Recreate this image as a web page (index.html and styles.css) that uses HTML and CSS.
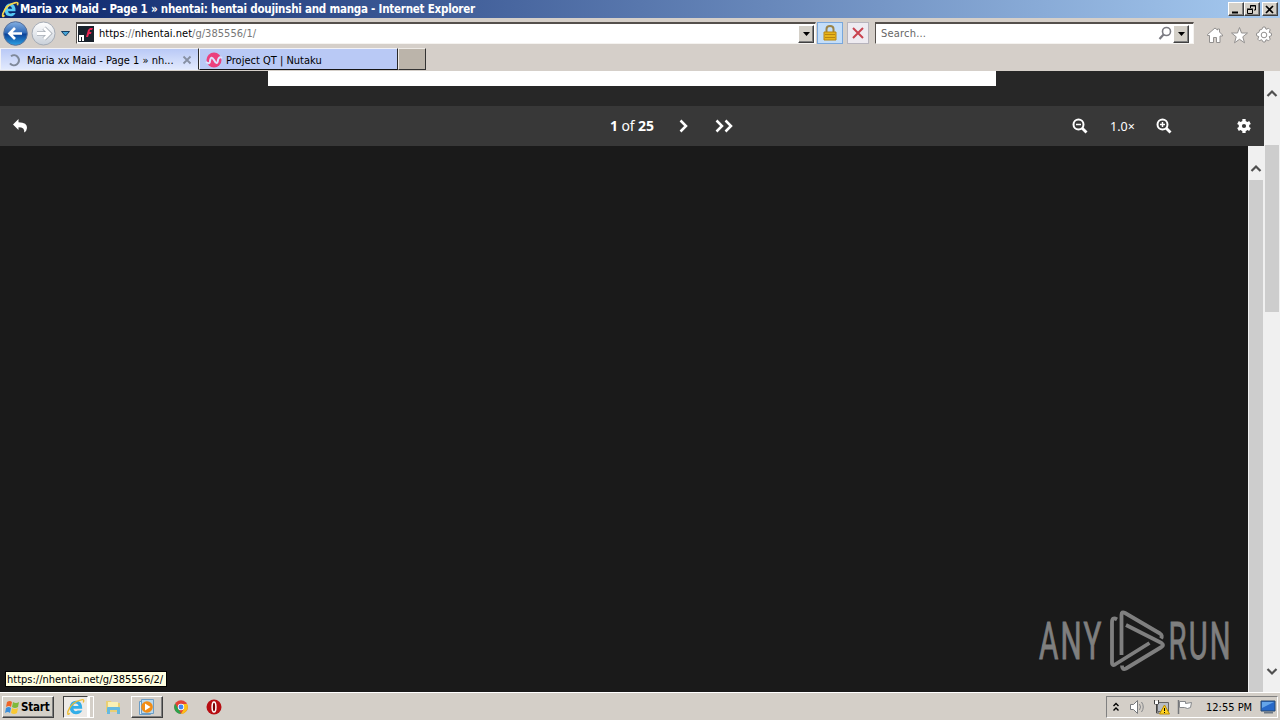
FILE: index.html
```html
<!DOCTYPE html>
<html lang="en">
<head>
    <meta charset="UTF-8">
    <title>Internet Explorer</title>
    <link rel="stylesheet" href="styles.css">
</head>
<body>
    <header class="titlebar">
        <svg class="ie-small" width="17" height="17" viewBox="0 0 20 20"><path d="M16 12H7q1 4 5 2h4q-2 4-6 4-7 0-7-8 1-7 7-7 6 0 6 9M7 9h5q-1-3-3-3-2 0-2 3" fill="#55c8f4" fill-rule="evenodd"/><path d="M3 17Q0 20 1 15 5 4 16 2q4-1 2 3" fill="none" stroke="#f5d34b" stroke-width="2"/></svg>
        <span class="window-title">Maria xx Maid - Page 1 » nhentai: hentai doujinshi and manga - Internet Explorer</span>
        <div class="window-buttons">
            <button><svg width="14" height="11"><path d="M3 8.5h6" stroke="#000" stroke-width="2"/></svg></button>
            <button><svg width="14" height="11"><path d="M5.500 4V1.500h5V6H9M5 2h6M2.500 5.500h5v4h-5zM2 5h6" fill="none" stroke="#000"/></svg></button>
            <button class="close"><svg width="14" height="11"><path d="M3 2l7 7M10 2L3 9" stroke="#000" stroke-width="1.700"/></svg></button>
        </div>
    </header>

    <div class="navbar">
        <svg class="nav-arrows" width="74" height="30" viewBox="0 0 74 30">
            <defs>
                <linearGradient id="blue" x2="0" y2="1"><stop stop-color="#85b0e2"/><stop offset=".48" stop-color="#2e69b8"/><stop offset=".52" stop-color="#0c4197"/><stop offset="1" stop-color="#2ba1e5"/></linearGradient>
                <linearGradient id="silver" x2="0" y2="1"><stop stop-color="#fff"/><stop offset="1" stop-color="#c9d0d9"/></linearGradient>
            </defs>
            <circle cx="15.500" cy="15.500" r="11.800" fill="url(#blue)" stroke="#56709b"/>
            <path d="M22 15.500H10m5-5.500l-5.500 5.500L15 21" fill="none" stroke="#fff" stroke-width="2.700"/>
            <circle cx="43.500" cy="15.500" r="11.500" fill="url(#silver)" stroke="#a4abb5"/>
            <path d="M37 15.500h12M44 10l5.500 5.500L44 21" fill="none" stroke="#aab0b8" stroke-width="4.500"/>
            <path d="M37 15.500h12M44 10l5.500 5.500L44 21" fill="none" stroke="#fff" stroke-width="2.800"/>
            <path d="M61.500 13.500h8l-4 4.500z" fill="#46a5d8" stroke="#153f63"/>
        </svg>
        <div class="address field">
            <svg width="16" height="16"><path d="M0 0h16v16H0z" fill="#19222c"/><path d="M1 15V9h5v6H4v-4H3v4z" fill="#fff"/><path d="M8 11l2-7 2-2h3l-1 2h-2l-.500 2h2l-.500 2h-2l-1 3z" fill="#ed2553"/></svg>
            <span class="url">https<i>://</i>nhentai.net<i>/g/385556/1/</i></span>
            <button class="drop"><svg width="9" height="6"><path d="M1 1h7L4.500 5z"/></svg></button>
        </div>
        <div class="tool lock"><svg width="16" height="18" viewBox="0 0 16 18"><path d="M4.500 9V5q0-3 3.500-3t3.500 3v4" fill="none" stroke="#9b8448" stroke-width="2"/><path d="M2 8h12v8H2z" fill="#e8b51b" stroke="#b98510"/><path d="M3 10.500h10M3 13.500h10" stroke="#b98510"/></svg></div>
        <div class="tool stop"><svg width="14" height="14"><path d="M2 2l10 10M12 2L2 12" stroke="#c94350" stroke-width="2"/></svg></div>
        <div class="search field">
            <span class="search-text">Search...</span>
            <svg width="15" height="15"><circle cx="8.500" cy="5.500" r="4" fill="none" stroke="#7b7b82" stroke-width="1.600"/><path d="M5.800 8.300L1.500 13" stroke="#7b7b82" stroke-width="2.200"/></svg>
            <button class="drop"><svg width="9" height="6"><path d="M1 1h7L4.500 5z"/></svg></button>
        </div>
        <svg class="commands" width="72" height="20" viewBox="0 0 72 20">
            <g fill="#fff" stroke="#92908f">
                <path d="M2.500 10.500v-1L10 3l2.500 2V4h2v3l3 3v1H15v6.500h-3.500v-5h-3v5H4.500v-7z"/>
                <path d="M34.500 2.500l2 5.500h6l-4.700 3.800 1.700 6-5-3.500-5 3.500 1.700-6L26.500 8h6z"/>
                <path d="M57.700 3.400l2-.400 1.400-2.500h2l.900 2.300 2.700-1 1.500 1.500-1 2.600 2.300 1v2.200l-2.300 1 1 2.600-1.500 1.500-2.700-1-.900 2.300h-2l-1.400-2.300-2.400 1-1.500-1.500 1-2.600-2.300-1V6.900l2.300-1z" transform="translate(-3 1.500)"/>
                <circle cx="59" cy="10" r="2.800"/>
            </g>
        </svg>
    </div>

    <nav class="tabs">
        <div class="tab active">
            <svg width="14" height="14"><path d="M4 3.300a5 5 0 1 1-1 7" fill="none" stroke="#7f899a" stroke-width="2"/></svg>
            <span class="tab-text">Maria xx Maid - Page 1 » nh...</span>
            <svg class="tab-close" width="10" height="10"><path d="M1.500 1.500l7 7M8.500 1.500l-7 7" stroke="#8790a3" stroke-width="1.800"/></svg>
        </div>
        <div class="tab">
            <svg width="16" height="16"><circle cx="8" cy="8" r="7.500" fill="#ec407d"/><path d="M0 10q4 3 4-1 1-6 4-1 3 6 4 0 1-4 4-2" fill="none" stroke="#dce5ff" stroke-width="2"/></svg>
            <span class="tab-text">Project QT | Nutaku</span>
        </div>
        <div class="new-tab"></div>
    </nav>

    <main class="viewport">
        <div class="page">
            <div class="page-top"><div class="banner"></div></div>
            <div class="reader-bar">
                <svg class="back" width="16" height="16"><path d="M1 6.500L6.500 1v3.200Q15.500 4.500 15 10q-.200 3-2.800 4.500Q13 9.300 6.500 9.200V12z" fill="#fff"/></svg>
                <div class="pager">
                    <span class="count"><b>1</b> of <b>25</b></span>
                    <svg width="12" height="14"><path d="M3.500 1.500L9 7l-5.500 5.500" fill="none" stroke="#fff" stroke-width="2.500"/></svg>
                    <svg class="last" width="20" height="14"><path d="M1.500 1.500L7 7l-5.500 5.500M10.500 1.500L16 7l-5.500 5.500" fill="none" stroke="#fff" stroke-width="2.500"/></svg>
                </div>
                <div class="zoom">
                    <svg width="16" height="16"><circle cx="6.500" cy="6.500" r="5" fill="none" stroke="#fff" stroke-width="2"/><path d="M10 10l4.500 4.500" stroke="#fff" stroke-width="2.800"/><path d="M4 6.500h5" stroke="#fff" stroke-width="1.500"/></svg>
                    <span>1.0×</span>
                    <svg width="16" height="16"><circle cx="6.500" cy="6.500" r="5" fill="none" stroke="#fff" stroke-width="2"/><path d="M10 10l4.500 4.500" stroke="#fff" stroke-width="2.800"/><path d="M4 6.500h5M6.500 4v5" stroke="#fff" stroke-width="1.500"/></svg>
                </div>
                <svg class="settings" width="16" height="16" viewBox="0 0 16 16"><circle cx="8" cy="8" r="3.700" fill="none" stroke="#fff" stroke-width="3.200"/><path d="M8 1v3M8 12v3M2 4.500l2.600 1.500M11.400 10l2.600 1.500M2 11.500L4.600 10M11.400 6L14 4.500" stroke="#fff" stroke-width="3.300"/></svg>
            </div>
            <div class="reader">
                <div class="canvas"></div>
                <div class="scrollbar inner">
                    <svg width="12" height="8"><path d="M1.500 7L6 2.500 10.500 7" fill="none" stroke="#505050" stroke-width="2.200"/></svg>
                    <div class="thumb"></div>
                </div>
            </div>
        </div>
        <div class="scrollbar outer">
            <svg width="12" height="8"><path d="M1.500 7L6 2.500 10.500 7" fill="none" stroke="#505050" stroke-width="2.200"/></svg>
            <div class="thumb"></div>
            <svg class="down" width="12" height="8"><path d="M1.500 1L6 5.500 10.500 1" fill="none" stroke="#505050" stroke-width="2.200"/></svg>
        </div>
        <div class="status">https://nhentai.net/g/385556/2/</div>
        <svg class="watermark" width="200" height="66" viewBox="0 0 200 66">
            <g class="mark-text">
                <text transform="translate(2 51) scale(.57 1)">ANY</text>
                <text transform="translate(131.500 51) scale(.56 1)">RUN</text>
            </g>
            <g fill="none" stroke="#7f7f7f" stroke-width="3.800" stroke-linejoin="round">
                <path d="M80 11.500q-5-3-5 3V55q0 3 3 1.500L112.500 35"/>
                <path d="M84.500 47V7q0-4 3.500-2l35 20.500q3 2 1 5"/>
                <path d="M89 17l35.500 18q3 2 0 4L89 60.500q-4 2-4-3"/>
            </g>
        </svg>
    </main>

    <footer class="taskbar">
        <button class="start">
            <svg width="17" height="16"><path d="M3 3q3-2 5 0L7 8q-2-2-5 0z" fill="#ef6426"/><path d="M9 3q3 2 6 0l-1 5q-3 2-6 0z" fill="#7fb93b"/><path d="M2 9q3-2 5 0l-1 5q-2-2-5 0z" fill="#3a8fdc"/><path d="M8 9q3 2 6 0l-1 5q-3 2-6 0z" fill="#f9c832"/></svg>
            <span class="start-text">Start</span>
        </button>
        <div class="task ie"><svg width="18" height="18" viewBox="0 0 20 20"><path d="M17 12H7q1 4 5 2h5q-2 4-7 4-7 0-7-8 1-7 7-7 7 0 7 9M7 9h6q-1-3-3-3-3 0-3 3" fill="#32aee8" fill-rule="evenodd"/><path d="M3 17Q0 20 1 15 5 4 16 2q4-1 2 3" fill="none" stroke="#edbd32" stroke-width="1.500"/></svg></div>
        <div class="task-edge"></div>
        <svg class="folder" width="18" height="18"><path d="M2 3h5l1 2h8v9H2z" fill="#e9cf75"/><path d="M4 4h10v5H4z" fill="#faf0b4"/><path d="M3 16v-6q0-1 1-1h11q1 0 1 1v6h-3v-4H6v4z" fill="#66b9df"/></svg>
        <div class="task player"><svg width="18" height="18"><path d="M1.500 3.500h11v13h-11z" fill="#dcebf6" stroke="#6b9dc6"/><path d="M3.500 1.500h12v14h-12z" fill="#b8d8ee" stroke="#6b9dc6"/><circle cx="9" cy="9" r="5.800" fill="#f28d16"/><path d="M7 5.500L12.500 9 7 12.500z" fill="#fff"/></svg></div>
        <svg class="chrome" width="14" height="14" viewBox="0 0 14 14"><circle cx="7" cy="7" r="6.800" fill="#e34336"/><path d="M1.100 3.600L5 10l2 3.800A6.800 6.800 0 0 1 1.100 3.600" fill="#2ba24c"/><path d="M7 4h6.100A6.800 6.800 0 0 1 7 13.800L9.800 9z" fill="#fbc116"/><circle cx="7" cy="7" r="3.200" fill="#fff"/><circle cx="7" cy="7" r="2.400" fill="#4285f4"/></svg>
        <svg class="opera" width="16" height="16"><circle cx="8" cy="8" r="7.500" fill="#b70d12"/><ellipse cx="8" cy="8" rx="1.900" ry="5" fill="#7b0005" stroke="#fff" stroke-width="1.500"/></svg>
        <div class="tray">
            <svg width="8" height="12"><path d="M1.500 5L4 2.500 6.500 5M1.500 9.500L4 7l2.500 2.500" fill="none" stroke="#000" stroke-width="1.400"/></svg>
            <svg class="speaker" width="17" height="16"><path d="M1.500 5.500h3l4-4v13l-4-4h-3z" fill="#fff" stroke="#77797c"/><path d="M10.500 5q2 3 0 6M12.500 3q3.500 5 0 10" fill="none" stroke="#85878a"/></svg>
            <svg class="network" width="17" height="16"><path d="M4.500 3.500h11v9h-11z" fill="#b8bdc4" stroke="#666"/><path d="M1.500 1v4h4V1M3.500 5v9h3" fill="none" stroke="#444"/><path d="M2 2h3v3H2z" fill="#fff"/><path d="M11.500 6l5 9h-10z" fill="#ffd321" stroke="#ba8b00"/><path d="M11.500 9v3M11.500 13v1" stroke="#000"/></svg>
            <svg class="flag" width="18" height="16"><path d="M2.500 1v14" stroke="#74767a" stroke-width="1.500"/><path d="M3.500 2.500h6v2l6-1-1 5q-3 2-6 0h-5z" fill="#fff" stroke="#85878a"/></svg>
            <span class="clock">12:55 PM</span>
            <svg class="desktop" width="16" height="14"><path d="M1 1h14v10H1z" fill="#2869c8" stroke="#27496f"/><path d="M2 2h12L2 8z" fill="#65a5e9"/><path d="M4 12.500h9" stroke="#6d7885" stroke-width="2"/></svg>
        </div>
    </footer>
</body>
</html>
```
FILE: styles.css
```css
* {
    box-sizing: border-box;
}

body {
    margin: 0;
    width: 1280px;
    height: 720px;
    display: flex;
    flex-direction: column;
    overflow: hidden;
    background: #d4d0c8;
    font-family: "DejaVu Sans Condensed", "DejaVu Sans", sans-serif;
    font-stretch: condensed;
    font-size: 11px;
    color: #000;
    white-space: nowrap;
}

svg {
    display: block;
    flex-shrink: 0;
    overflow: visible;
}

button {
    margin: 0;
    padding: 0;
    border: 1px solid;
    border-color: #fff #404040 #404040 #fff;
    background: #d4d0c8;
    box-shadow: inset -1px -1px #808080;
    font: inherit;
}

/* Title bar */
.titlebar {
    height: 18px;
    display: flex;
    align-items: center;
    padding: 0 2px;
    background: linear-gradient(90deg, #0a246a, #a6caf0);
}

.window-title {
    flex: 1;
    margin-left: 1px;
    color: #fff;
    font-size: 11.5px;
    font-weight: bold;
    letter-spacing: -0.23px;
}

.window-buttons {
    display: flex;
}

.window-buttons button {
    width: 16px;
    height: 14px;
}

.window-buttons .close {
    margin-left: 2px;
}

/* Address row */
.navbar {
    height: 30px;
    display: flex;
    align-items: center;
    background: #d5cfc9;
}

.nav-arrows {
    margin-right: 2px;
}

.field {
    height: 22px;
    display: flex;
    align-items: center;
    background: #fff;
    border: 1px solid;
    border-color: #55504c #f5f3f0 #f5f3f0 #55504c;
    border-top-width: 2px;
}

.address {
    width: 740px;
    padding: 0 1px;
}

.url {
    flex: 1;
    margin-left: 5px;
    letter-spacing: 0.03px;
}

.url i {
    font-style: normal;
    color: #777;
}

.drop {
    width: 16px;
    height: 18px;
    display: flex;
    align-items: center;
    justify-content: center;
}

.tool {
    height: 22px;
    display: flex;
    align-items: center;
    justify-content: center;
    border: 1px solid #79a7dc;
}

.lock {
    width: 26px;
    margin-left: 1px;
    background: #c4def9;
}

.stop {
    width: 22px;
    margin-left: 4px;
    background: #eeebf1;
    border-color: #b7b4bd;
}

.search {
    width: 319px;
    margin-left: 6px;
    padding: 0 4px 0 5px;
}

.search-text {
    flex: 1;
    color: #666;
    letter-spacing: 0.2px;
}

.commands {
    margin-left: 11px;
    margin-top: 3px;
}

/* Tabs */
.tabs {
    height: 23px;
    display: flex;
    background: #d5cfc9;
}

.tab {
    width: 199px;
    height: 22px;
    display: flex;
    align-items: center;
    padding: 2px 0 0 6px;
    border: 1px solid;
    border-color: #f2f2f6 #282828 #151515 #f2f2f6;
    background: #b9c9f5;
}

.tab.active {
    border-bottom-color: #e6ecfc;
    background: linear-gradient(#b9c9f6, #e1e9fd);
}

.tab-text {
    margin-left: 4px;
}

.active .tab-text {
    margin-left: 6px;
    width: 155px;
}

.new-tab {
    width: 28px;
    height: 22px;
    border: 1px solid;
    border-color: #eeeae5 #333 #333 #eeeae5;
    background: #bbb4aa;
}

/* Page */
.viewport {
    position: relative;
    height: 621px;
    display: flex;
}

.page {
    width: 1264px;
    display: flex;
    flex-direction: column;
}

.page-top {
    height: 35px;
    background: #272727;
}

.banner {
    width: 728px;
    height: 15px;
    margin-left: 268px;
    background: #fff;
}

.reader-bar {
    height: 40px;
    display: flex;
    align-items: center;
    padding: 0 12px;
    background: #383838;
    color: #fff;
    font-family: "Noto Sans", sans-serif;
    font-size: 14px;
    font-stretch: normal;
}

.pager {
    width: 462px;
    margin-left: 582px;
    display: flex;
    align-items: center;
}

.count {
    width: 67px;
    margin-top: -2px;
    letter-spacing: -0.1px;
}

.last {
    margin-left: 26px;
}

.zoom {
    display: flex;
    align-items: center;
    font-size: 12.5px;
}

.zoom span {
    width: 24px;
    margin: 0 22px 0 22px;
}

.settings {
    margin-left: auto;
}

.reader {
    flex: 1;
    display: flex;
}

.canvas {
    flex: 1;
    background: #1a1a1a;
}

.scrollbar {
    width: 16px;
    display: flex;
    flex-direction: column;
    align-items: center;
    background: #f0f0f0;
}

.thumb {
    width: 14px;
    background: #cdcdcd;
}

.inner {
    padding-top: 18px;
}

.inner .thumb {
    flex: 1;
    margin-top: 8px;
}

.outer {
    padding: 18px 0 16px;
}

.outer .thumb {
    height: 167px;
    margin-top: 48px;
}

.outer .down {
    margin-top: auto;
}

.status {
    position: absolute;
    left: 5px;
    bottom: 5px;
    width: 162px;
    height: 16px;
    padding-left: 1px;
    line-height: 15px;
    border: 1px solid #000;
    background: #ffffe1;
}

.watermark {
    position: absolute;
    left: 1037px;
    top: 537px;
}

.mark-text {
    fill: #7f7f7f;
    stroke: #7f7f7f;
    stroke-width: 1px;
    font-family: Roboto, sans-serif;
    font-size: 52px;
    font-stretch: normal;
    letter-spacing: 4px;
}

/* Taskbar */
.taskbar {
    height: 28px;
    display: flex;
    align-items: center;
    padding: 1px 2px 0;
    border-top: 1px solid #fff;
    background: #d4cfc8;
}

.start {
    width: 52px;
    height: 22px;
    display: flex;
    align-items: center;
    padding-left: 1px;
    font-size: 11.5px;
    font-weight: bold;
    letter-spacing: -0.2px;
}

.task {
    height: 22px;
    display: flex;
    align-items: center;
    justify-content: center;
    border: 1px solid;
}

.ie {
    width: 25px;
    margin-left: 9px;
    border-color: #404040 #fff #fff #404040;
    background: #edeae7;
}

.task-edge {
    width: 6px;
    height: 22px;
    border: solid #fff;
    border-width: 1px 1px 1px 2px;
}

.folder {
    margin-left: 10px;
}

.player {
    width: 32px;
    margin-left: 9px;
    border-color: #fff #404040 #404040 #fff;
    box-shadow: inset -1px -1px #808080;
}

.chrome {
    margin-left: 11px;
}

.opera {
    margin-left: 18px;
}

.tray {
    width: 172px;
    height: 22px;
    display: flex;
    align-items: center;
    margin-left: auto;
    padding-left: 5px;
    border: 1px solid;
    border-color: #808080 #fff #fff #808080;
}

.speaker {
    margin-left: 9px;
}

.network {
    margin-left: 7px;
}

.flag {
    margin-left: 6px;
}

.clock {
    width: 45px;
    margin-left: 12px;
}

.desktop {
    margin-left: 9px;
}
```
